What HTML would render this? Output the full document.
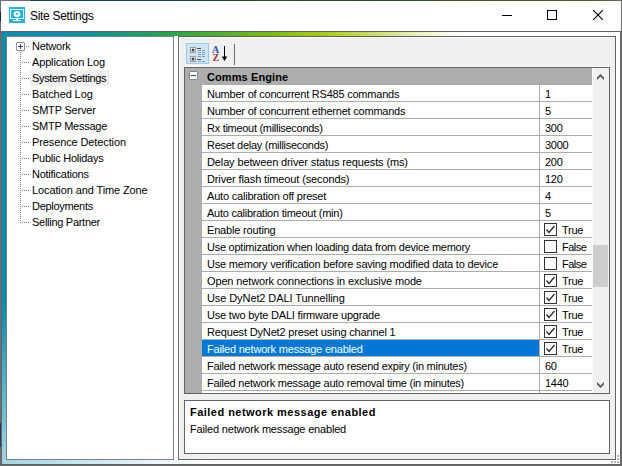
<!DOCTYPE html><html><head><meta charset="utf-8"><title>Site Settings</title><style>
*{margin:0;padding:0;box-sizing:border-box}
html,body{width:622px;height:466px;overflow:hidden;background:#6e6e6e}
body{position:relative;font-family:"Liberation Sans",sans-serif;font-size:11px;color:#000;-webkit-font-smoothing:antialiased}
.a{position:absolute}
.t{position:absolute;white-space:nowrap;line-height:16px;height:16px;letter-spacing:-0.25px}
.tr{position:absolute;left:32px;white-space:nowrap;line-height:16px;height:16px;letter-spacing:-0.25px}
.dot-h{position:absolute;height:1px;background-image:linear-gradient(to right,#808080 50%,transparent 50%);background-size:2px 1px}
.dot-v{position:absolute;width:1px;background-image:linear-gradient(to bottom,#808080 50%,transparent 50%);background-size:1px 2px}
.row{position:absolute;left:202px;width:390px;height:16px;background:#fff}
.cb{position:absolute;left:544px;width:13px;height:13px;border:1px solid #333;background:#fff}
</style></head><body>
<div class="a" style="left:0;top:0;width:622px;height:1px;background:linear-gradient(to right,#6e6e6e 0,#6e6e6e 30px,#0d4656 31px,#0d4656 180px,#1c4a2c 220px,#2c4f22 400px,#4a5a20 500px,#5a5e30 600px,#6a6a60 622px)"></div>
<div class="a" style="left:0;top:1px;width:1px;height:465px;background:#6c6c6c"></div>
<div class="a" style="left:621px;top:1px;width:1px;height:465px;background:#6e6e66"></div>
<div class="a" style="left:0;top:464px;width:622px;height:1px;background:#625e5e"></div>
<div class="a" style="left:0;top:465px;width:622px;height:1px;background:#707070"></div>
<div class="a" style="left:0;top:12px;width:1px;height:9px;background:#0c2436"></div>
<div class="a" style="left:0;top:423px;width:1px;height:24px;background:#2c3760"></div>
<div class="a" style="left:1px;top:1px;width:620px;height:30px;background:#fff"></div>
<div class="a" style="left:1px;top:31px;width:620px;height:433px;background:#646464"></div>
<div class="a" style="left:2px;top:32px;width:618px;height:432px;background:linear-gradient(to right,#048cb2 0,#068db0 60px,#0d9a86 110px,#1ea850 160px,#3aae30 200px,#7abd10 270px,#a6cc10 320px,#c8de60 370px,#eaf3c0 420px,#fff 460px)"></div>
<div class="a" style="left:2px;top:36px;width:4px;height:428px;background:linear-gradient(to bottom,#058db2 0,#058db2 270px,#a2d7e5 428px)"></div>
<div class="a" style="left:2px;top:460px;width:618px;height:4px;background:linear-gradient(to right,#9fd6e6 0,#c5e6ef 80px,#eef7fa 160px,#fff 220px)"></div>
<svg class="a" style="left:9px;top:7px" width="16" height="16" viewBox="0 0 16 16"><rect width="16" height="16" fill="#1cb3f3"/><rect x="1.5" y="2.5" width="13" height="9" fill="none" stroke="#fff" stroke-width="1"/><ellipse cx="8" cy="7" rx="3.4" ry="3" fill="#fff"/><circle cx="8" cy="7" r="1.1" fill="#1cb3f3"/><rect x="7" y="12" width="2" height="1.5" fill="#fff"/><rect x="4" y="13" width="8" height="1" fill="#fff"/></svg>
<div class="a" style="left:30px;top:8px;font-size:12px;line-height:16px;white-space:nowrap;letter-spacing:-0.3px">Site Settings</div>
<div class="a" style="left:502px;top:15px;width:10px;height:1px;background:#000"></div>
<div class="a" style="left:547px;top:10px;width:10px;height:10px;border:1px solid #000"></div>
<svg class="a" style="left:593px;top:10px" width="10" height="10" viewBox="0 0 10 10"><path d="M0 0L10 10M10 0L0 10" stroke="#000" stroke-width="1.1" fill="none"/></svg>
<div class="a" style="left:6px;top:36px;width:168px;height:424px;background:#fff;border:1px solid #7c7f8c"></div>
<div class="a" style="left:174px;top:36px;width:4px;height:424px;background:#fff"></div>
<div class="dot-v" style="left:20px;top:52px;height:171px"></div>
<div class="dot-h" style="left:26px;top:46px;width:4px"></div>
<div class="tr" style="top:38px;letter-spacing:-0.25px">Network</div>
<div class="dot-h" style="left:20px;top:62px;width:10px"></div>
<div class="tr" style="top:54px;letter-spacing:-0.15px">Application Log</div>
<div class="a" style="left:30px;top:70px;width:79px;height:16px;background:#efefef"></div>
<div class="dot-h" style="left:20px;top:78px;width:10px"></div>
<div class="tr" style="top:70px;letter-spacing:-0.35px">System Settings</div>
<div class="dot-h" style="left:20px;top:94px;width:10px"></div>
<div class="tr" style="top:86px;letter-spacing:-0.1px">Batched Log</div>
<div class="dot-h" style="left:20px;top:110px;width:10px"></div>
<div class="tr" style="top:102px;letter-spacing:-0.19px">SMTP Server</div>
<div class="dot-h" style="left:20px;top:126px;width:10px"></div>
<div class="tr" style="top:118px;letter-spacing:-0.25px">SMTP Message</div>
<div class="dot-h" style="left:20px;top:142px;width:10px"></div>
<div class="tr" style="top:134px;letter-spacing:-0.115px">Presence Detection</div>
<div class="dot-h" style="left:20px;top:158px;width:10px"></div>
<div class="tr" style="top:150px;letter-spacing:-0.25px">Public Holidays</div>
<div class="dot-h" style="left:20px;top:174px;width:10px"></div>
<div class="tr" style="top:166px;letter-spacing:-0.25px">Notifications</div>
<div class="dot-h" style="left:20px;top:190px;width:10px"></div>
<div class="tr" style="top:182px;letter-spacing:-0.11px">Location and Time Zone</div>
<div class="dot-h" style="left:20px;top:206px;width:10px"></div>
<div class="tr" style="top:198px;letter-spacing:-0.3px">Deployments</div>
<div class="dot-h" style="left:20px;top:222px;width:10px"></div>
<div class="tr" style="top:214px;letter-spacing:-0.28px">Selling Partner</div>
<div class="a" style="left:16px;top:42px;width:9px;height:9px;border:1px solid #8f8f8f;background:#fff;border-radius:1px"></div>
<div class="a" style="left:18px;top:46px;width:5px;height:1px;background:#2a3f9a"></div>
<div class="a" style="left:20px;top:44px;width:1px;height:5px;background:#2a3f9a"></div>
<div class="a" style="left:178px;top:36px;width:438px;height:424px;background:#f0f0f0;border:1px solid #646464"></div>
<div class="a" style="left:179px;top:37px;width:436px;height:1px;background:#fff"></div>
<div class="a" style="left:179px;top:37px;width:1px;height:422px;background:#fff"></div>
<div class="a" style="left:186px;top:43px;width:23px;height:21px;background:#cce4f7;border:1px solid #99ccf3"></div>
<svg class="a" style="left:190px;top:46px" width="16" height="17" viewBox="0 0 16 17">
<rect x="0" y="1" width="6" height="6" fill="#9c9c9c"/><rect x="1" y="2" width="4" height="4" fill="#fff"/><rect x="1" y="5" width="4" height="1" fill="#e4e0d8"/><rect x="1.5" y="3.5" width="3" height="1" fill="#000"/><rect x="2.5" y="2.5" width="1" height="3" fill="#000"/>
<rect x="0" y="10" width="6" height="6" fill="#9c9c9c"/><rect x="1" y="11" width="4" height="4" fill="#fff"/><rect x="1" y="14" width="4" height="1" fill="#e4e0d8"/><rect x="1.5" y="12.5" width="3" height="1" fill="#000"/><rect x="2.5" y="11.5" width="1" height="3" fill="#000"/>
<rect x="7" y="2" width="4" height="1" fill="#4a4a4a"/>
<g fill="#8e98a6"><rect x="8" y="4" width="3" height="1"/><rect x="12" y="4" width="3" height="1"/>
<rect x="8" y="6" width="3" height="1"/><rect x="12" y="6" width="3" height="1"/>
<rect x="8" y="8" width="3" height="1"/><rect x="12" y="8" width="3" height="1"/>
<rect x="8" y="10" width="3" height="1"/><rect x="12" y="10" width="3" height="1"/>
<rect x="8" y="15" width="3" height="1"/><rect x="12" y="15" width="3" height="1"/></g>
<rect x="7" y="13" width="4" height="1" fill="#4a4a4a"/>
</svg>
<div class="a" style="left:212px;top:45px;font-family:'Liberation Serif',serif;font-weight:bold;font-size:10px;line-height:10px;color:#2b4db5">A</div>
<div class="a" style="left:212.5px;top:53px;font-family:'Liberation Serif',serif;font-weight:bold;font-size:10px;line-height:10px;color:#9a3535">Z</div>
<svg class="a" style="left:221px;top:46px" width="7" height="15" viewBox="0 0 7 15"><rect x="3" y="0" width="1" height="12" fill="#000"/><path d="M0.8 10.5h5.4L3.5 15z" fill="#000"/></svg>
<div class="a" style="left:234px;top:44px;width:1px;height:21px;background:#6e6e6e"></div>
<div class="a" style="left:184px;top:66px;width:426px;height:1px;background:#fcfcfc"></div>
<div class="a" style="left:184px;top:67px;width:426px;height:327px;background:#adadad;border:1px solid #646464"></div>
<div class="a" style="left:189px;top:71px;width:9px;height:9px;border:1px solid #8a8a8a;background:#fff;border-radius:1px"></div>
<div class="a" style="left:191px;top:75px;width:5px;height:1px;background:#2a3f9a"></div>
<div class="t" style="left:207px;top:69px;font-weight:bold;letter-spacing:0.1px">Comms Engine</div>
<div class="row" style="top:85px"></div>
<div class="a" style="left:539px;top:85px;width:1px;height:16px;background:#adadad"></div>
<div class="t" style="left:207px;top:86px;letter-spacing:-0.22px">Number of concurrent RS485 commands</div>
<div class="t" style="left:545px;top:86px">1</div>
<div class="row" style="top:102px"></div>
<div class="a" style="left:539px;top:102px;width:1px;height:16px;background:#adadad"></div>
<div class="t" style="left:207px;top:103px;letter-spacing:-0.22px">Number of concurrent ethernet commands</div>
<div class="t" style="left:545px;top:103px">5</div>
<div class="row" style="top:119px"></div>
<div class="a" style="left:539px;top:119px;width:1px;height:16px;background:#adadad"></div>
<div class="t" style="left:207px;top:120px;letter-spacing:-0.29px">Rx timeout (milliseconds)</div>
<div class="t" style="left:545px;top:120px">300</div>
<div class="row" style="top:136px"></div>
<div class="a" style="left:539px;top:136px;width:1px;height:16px;background:#adadad"></div>
<div class="t" style="left:207px;top:137px;letter-spacing:-0.28px">Reset delay (milliseconds)</div>
<div class="t" style="left:545px;top:137px">3000</div>
<div class="row" style="top:153px"></div>
<div class="a" style="left:539px;top:153px;width:1px;height:16px;background:#adadad"></div>
<div class="t" style="left:207px;top:154px;letter-spacing:-0.125px">Delay between driver status requests (ms)</div>
<div class="t" style="left:545px;top:154px">200</div>
<div class="row" style="top:170px"></div>
<div class="a" style="left:539px;top:170px;width:1px;height:16px;background:#adadad"></div>
<div class="t" style="left:207px;top:171px;letter-spacing:-0.125px">Driver flash timeout (seconds)</div>
<div class="t" style="left:545px;top:171px">120</div>
<div class="row" style="top:187px"></div>
<div class="a" style="left:539px;top:187px;width:1px;height:16px;background:#adadad"></div>
<div class="t" style="left:207px;top:188px;letter-spacing:-0.2px">Auto calibration off preset</div>
<div class="t" style="left:545px;top:188px">4</div>
<div class="row" style="top:204px"></div>
<div class="a" style="left:539px;top:204px;width:1px;height:16px;background:#adadad"></div>
<div class="t" style="left:207px;top:205px;letter-spacing:-0.25px">Auto calibration timeout (min)</div>
<div class="t" style="left:545px;top:205px">5</div>
<div class="row" style="top:221px"></div>
<div class="a" style="left:539px;top:221px;width:1px;height:16px;background:#adadad"></div>
<div class="t" style="left:207px;top:222px;letter-spacing:-0.17px">Enable routing</div>
<div class="cb" style="top:223px"></div>
<svg class="a" style="left:544px;top:223px" width="13" height="13" viewBox="0 0 13 13"><path d="M2.5 6.5L5 9.5L10.5 3" stroke="#222" stroke-width="1.2" fill="none"/></svg>
<div class="t" style="left:562px;top:222px;letter-spacing:-0.25px">True</div>
<div class="row" style="top:238px"></div>
<div class="a" style="left:539px;top:238px;width:1px;height:16px;background:#adadad"></div>
<div class="t" style="left:207px;top:239px;letter-spacing:-0.25px">Use optimization when loading data from device memory</div>
<div class="cb" style="top:240px"></div>
<div class="t" style="left:562px;top:239px;letter-spacing:-0.5px">False</div>
<div class="row" style="top:255px"></div>
<div class="a" style="left:539px;top:255px;width:1px;height:16px;background:#adadad"></div>
<div class="t" style="left:207px;top:256px;letter-spacing:-0.2px">Use memory verification before saving modified data to device</div>
<div class="cb" style="top:257px"></div>
<div class="t" style="left:562px;top:256px;letter-spacing:-0.5px">False</div>
<div class="row" style="top:272px"></div>
<div class="a" style="left:539px;top:272px;width:1px;height:16px;background:#adadad"></div>
<div class="t" style="left:207px;top:273px;letter-spacing:-0.14px">Open network connections in exclusive mode</div>
<div class="cb" style="top:274px"></div>
<svg class="a" style="left:544px;top:274px" width="13" height="13" viewBox="0 0 13 13"><path d="M2.5 6.5L5 9.5L10.5 3" stroke="#222" stroke-width="1.2" fill="none"/></svg>
<div class="t" style="left:562px;top:273px;letter-spacing:-0.25px">True</div>
<div class="row" style="top:289px"></div>
<div class="a" style="left:539px;top:289px;width:1px;height:16px;background:#adadad"></div>
<div class="t" style="left:207px;top:290px;letter-spacing:-0.09px">Use DyNet2 DALI Tunnelling</div>
<div class="cb" style="top:291px"></div>
<svg class="a" style="left:544px;top:291px" width="13" height="13" viewBox="0 0 13 13"><path d="M2.5 6.5L5 9.5L10.5 3" stroke="#222" stroke-width="1.2" fill="none"/></svg>
<div class="t" style="left:562px;top:290px;letter-spacing:-0.25px">True</div>
<div class="row" style="top:306px"></div>
<div class="a" style="left:539px;top:306px;width:1px;height:16px;background:#adadad"></div>
<div class="t" style="left:207px;top:307px;letter-spacing:-0.2px">Use two byte DALI firmware upgrade</div>
<div class="cb" style="top:308px"></div>
<svg class="a" style="left:544px;top:308px" width="13" height="13" viewBox="0 0 13 13"><path d="M2.5 6.5L5 9.5L10.5 3" stroke="#222" stroke-width="1.2" fill="none"/></svg>
<div class="t" style="left:562px;top:307px;letter-spacing:-0.25px">True</div>
<div class="row" style="top:323px"></div>
<div class="a" style="left:539px;top:323px;width:1px;height:16px;background:#adadad"></div>
<div class="t" style="left:207px;top:324px;letter-spacing:-0.16px">Request DyNet2 preset using channel 1</div>
<div class="cb" style="top:325px"></div>
<svg class="a" style="left:544px;top:325px" width="13" height="13" viewBox="0 0 13 13"><path d="M2.5 6.5L5 9.5L10.5 3" stroke="#222" stroke-width="1.2" fill="none"/></svg>
<div class="t" style="left:562px;top:324px;letter-spacing:-0.25px">True</div>
<div class="row" style="top:340px"></div>
<div class="a" style="left:539px;top:340px;width:1px;height:16px;background:#adadad"></div>
<div class="a" style="left:202px;top:340px;width:337px;height:16px;background:#0078d7"></div>
<div class="t" style="left:207px;top:341px;color:#fff;letter-spacing:-0.19px">Failed network message enabled</div>
<div class="cb" style="top:342px"></div>
<svg class="a" style="left:544px;top:342px" width="13" height="13" viewBox="0 0 13 13"><path d="M2.5 6.5L5 9.5L10.5 3" stroke="#222" stroke-width="1.2" fill="none"/></svg>
<div class="t" style="left:562px;top:341px;letter-spacing:-0.25px">True</div>
<div class="row" style="top:357px"></div>
<div class="a" style="left:539px;top:357px;width:1px;height:16px;background:#adadad"></div>
<div class="t" style="left:207px;top:358px;letter-spacing:-0.25px">Failed network message auto resend expiry (in minutes)</div>
<div class="t" style="left:545px;top:358px">60</div>
<div class="row" style="top:374px"></div>
<div class="a" style="left:539px;top:374px;width:1px;height:16px;background:#adadad"></div>
<div class="t" style="left:207px;top:375px;letter-spacing:-0.25px">Failed network message auto removal time (in minutes)</div>
<div class="t" style="left:545px;top:375px">1440</div>
<div class="row" style="top:391px;height:2px"></div>
<div class="a" style="left:539px;top:391px;width:1px;height:2px;background:#adadad"></div>
<div class="a" style="left:592px;top:68px;width:17px;height:325px;background:#f0f0f0"></div>
<div class="a" style="left:593px;top:245px;width:15px;height:42px;background:#cdcdcd"></div>
<div class="a" style="left:592px;top:68px;width:1px;height:325px;background:#fafafa"></div>
<svg class="a" style="left:596px;top:73px" width="9" height="8" viewBox="0 0 9 8"><path d="M1 4.5L4.5 1L8 4.5L8 7L4.5 3.5L1 7Z" fill="#555"/></svg>
<svg class="a" style="left:596px;top:381px" width="9" height="8" viewBox="0 0 9 8"><path d="M1 1L4.5 4.5L8 1L8 3.5L4.5 7L1 3.5Z" fill="#555"/></svg>
<div class="a" style="left:184px;top:400px;width:426px;height:54px;background:#fff;border:1px solid #646464"></div>
<div class="t" style="left:190px;top:404px;font-weight:bold;letter-spacing:0.47px">Failed network message enabled</div>
<div class="t" style="left:190px;top:421px;letter-spacing:-0.18px">Failed network message enabled</div>
<div class="a" style="left:617px;top:455px;width:2px;height:2px;background:#b2b2b2"></div>
<div class="a" style="left:617px;top:458px;width:2px;height:2px;background:#b2b2b2"></div>
<div class="a" style="left:617px;top:461px;width:2px;height:2px;background:#b2b2b2"></div>
<div class="a" style="left:614px;top:461px;width:2px;height:2px;background:#b2b2b2"></div>
<div class="a" style="left:611px;top:461px;width:2px;height:2px;background:#b2b2b2"></div>
</body></html>
